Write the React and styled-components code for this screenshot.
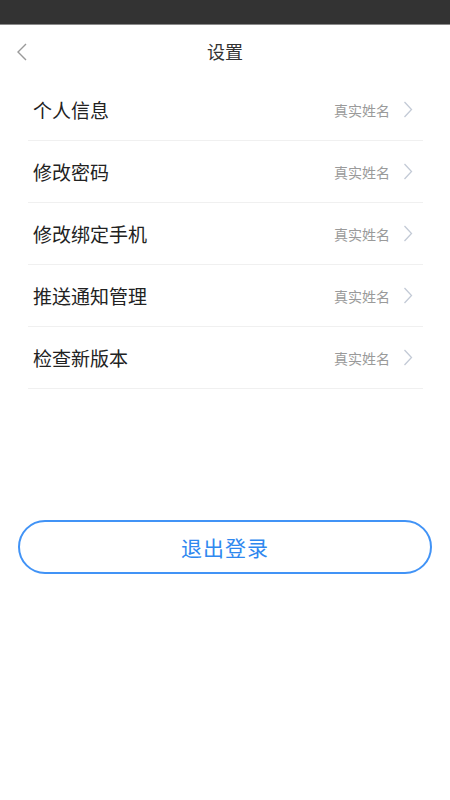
import React from "react";
import styled, { createGlobalStyle } from "styled-components";

const GlobalStyle = createGlobalStyle`
  body {
    margin: 0;
    background: #fff;
    font-family: "Noto Sans CJK SC", "Noto Sans", sans-serif;
  }
`;

const Page = styled.div`
  width: 450px;
  min-height: 800px;
  background: #fff;
`;

const StatusBar = styled.div`
  height: 24px;
  background: #333333;
  border-bottom: 1px solid #8a8a8a;
`;

const Header = styled.div`
  position: relative;
  height: 54px;
  box-sizing: border-box;
  padding-bottom: 3px;
  display: flex;
  align-items: center;
  justify-content: center;
`;

const Back = styled.button`
  position: absolute;
  left: 14px;
  top: 17px;
  border: none;
  background: none;
  padding: 0;
  display: flex;
`;

const Title = styled.h1`
  margin: 0;
  font-size: 18px;
  font-weight: 400;
  color: #333;
`;

const List = styled.div`
  margin: 0 27px 0 28px;
`;

const Row = styled.div`
  height: 61px;
  display: flex;
  align-items: center;
  padding: 0 10px 0 5px;
  border-bottom: 1px solid #f0f0f0;
`;

const Label = styled.span`
  flex: 1;
  font-size: 19px;
  color: #222;
`;

const Value = styled.span`
  font-size: 14px;
  color: #9a9a9a;
  margin-right: 13px;
`;

const LogoutWrap = styled.div`
  padding: 131px 18px 0;
`;

const Logout = styled.button`
  width: 100%;
  height: 54px;
  border: 2px solid #4193f6;
  border-radius: 27px;
  background: #fff;
  color: #2f88ef;
  font-family: inherit;
  font-size: 21px;
  letter-spacing: 1px;
`;

const Chevron = ({ color, w = 10, h = 17 }) => (
  <svg width={w} height={h} viewBox="0 0 10 17" fill="none">
    <path d="M1.5 1 L8.5 8.5 L1.5 16" stroke={color} strokeWidth="1.3" />
  </svg>
);

const items = ["个人信息", "修改密码", "修改绑定手机", "推送通知管理", "检查新版本"];

export default function App() {
  return (
    <Page>
      <GlobalStyle />
      <StatusBar />
      <Header>
        <Back>
          <svg width="14" height="20" viewBox="0 0 14 20" fill="none">
            <path d="M12 2 L4 10 L12 18" stroke="#9a9a9a" strokeWidth="1.4" />
          </svg>
        </Back>
        <Title>设置</Title>
      </Header>
      <List>
        {items.map((item) => (
          <Row key={item}>
            <Label>{item}</Label>
            <Value>真实姓名</Value>
            <Chevron color="#c3cad6" />
          </Row>
        ))}
      </List>
      <LogoutWrap>
        <Logout>退出登录</Logout>
      </LogoutWrap>
    </Page>
  );
}
